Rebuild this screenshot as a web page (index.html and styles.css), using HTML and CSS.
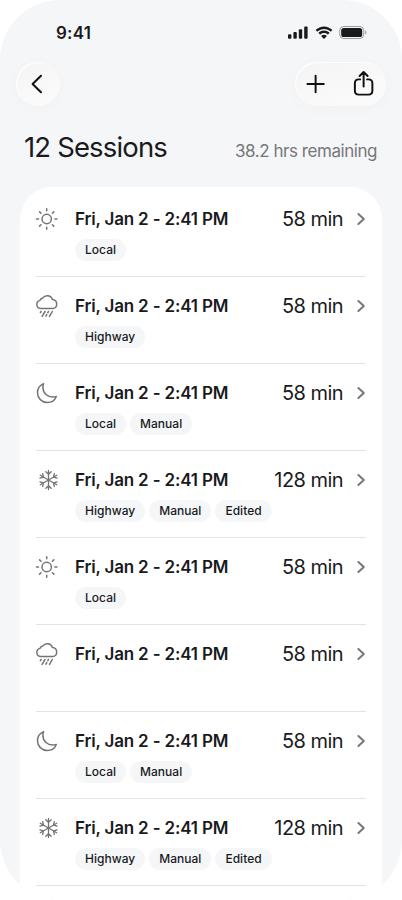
FILE: index.html
```html
<!DOCTYPE html>
<html lang="en">
<head>
<meta charset="utf-8">
<title>Sessions</title>
<link rel="stylesheet" href="styles.css">
</head>
<body>
<svg class="defs" width="0" height="0" aria-hidden="true">
  <symbol id="sun" viewBox="0 0 24 24"><circle cx="11.700" cy="12" r="4.700"/><path d="M11.700 1.800v2M11.700 20.200v2M1.500 12h2M19.900 12h2M4.600 4.900l1.400 1.400M17.400 17.700l1.400 1.400M4.600 19.100l1.400-1.400M17.400 6.300l1.400-1.400"/></symbol>
  <symbol id="rain" viewBox="0 0 24 24"><path d="M5.500 14.600a4.200 4.200 0 0 1-.6-8.200 3.800 3.800 0 0 1 2.900-2.500A5.500 5.500 0 0 1 17.500 5.600a4.550 4.550 0 0 1 .5 9z"/><path class="thin" d="M6.100 17.500l-.7 1.200M10 17.500l-2.900 4.900M13.500 17.500l-.7 1.200M11.800 20.600l-.9 1.600M17.300 17.500l-2.800 4.900"/></symbol>
  <symbol id="moon" viewBox="0 0 24 24"><path d="M8.600 2.600C4.800 4.200 2.500 7.600 2.500 11.700c0 5.500 4.200 9.700 9.700 9.700 4.200 0 7.700-2.300 9.100-6-1.100.4-2.200.6-3.500.6-5.700 0-9.900-4-9.900-9.700 0-1.400.2-2.600.7-3.700z"/></symbol>
  <symbol id="snow" viewBox="0 0 24 24"><g id="arm"><path d="M11.500 12V2.500M8.800 3.700l2.700 2.500 2.700-2.500"/></g><use href="#arm" transform="rotate(60 11.500 12)"/><use href="#arm" transform="rotate(120 11.500 12)"/><use href="#arm" transform="rotate(180 11.500 12)"/><use href="#arm" transform="rotate(240 11.500 12)"/><use href="#arm" transform="rotate(300 11.500 12)"/></symbol>
  <symbol id="chev" viewBox="0 0 10 14"><path d="M2.400 2l5.400 5-5.400 5"/></symbol>
</svg>
<main class="screen">
  <header class="status">
    <span class="time">9:41</span>
    <div class="indicators">
      <svg width="20" height="13" viewBox="0 0 20 13"><rect x="0" y="8.300" width="3.400" height="4.400" rx="1"/><rect x="5.400" y="6" width="3.400" height="6.700" rx="1"/><rect x="10.800" y="3.200" width="3.400" height="9.500" rx="1"/><rect x="16.200" y=".5" width="3.400" height="12.200" rx="1"/></svg>
      <svg width="18" height="13" viewBox="0 0 18 13"><path d="M9 2.900c2.500 0 4.800 1 6.500 2.600l.4.100 1.300-1.400v-.4A12 12 0 0 0 9 .4 12 12 0 0 0 .8 3.800v.4l1.300 1.400.4-.1A9.400 9.400 0 0 1 9 2.900zM9 7c1.400 0 2.700.5 3.600 1.400h.4l1.400-1.500v-.4A7.900 7.900 0 0 0 9 4.500a7.900 7.900 0 0 0-5.400 2v.4L5 8.400h.4A5.300 5.300 0 0 1 9 7zM9.300 12.700l2.400-2.500v-.4A4 4 0 0 0 9 8.700a4 4 0 0 0-2.700 1.100v.4l2.400 2.500z"/></svg>
      <svg width="28" height="13" viewBox="0 0 28 13"><rect x=".7" y=".5" width="24" height="12" rx="4" fill="none" stroke="#1a1a1c" stroke-opacity=".4"/><rect x="2.200" y="2" width="21" height="9" rx="2.600"/><path d="M26.200 4.500v4c.8-.3 1.300-1.100 1.300-2s-.5-1.700-1.300-2z" opacity=".4"/></svg>
    </div>
  </header>
  <nav class="toolbar">
    <button class="glass back" aria-label="Back"><svg width="44" height="44" viewBox="0 0 44 44"><path d="M25 13.700L16.600 22 25 30.300"/></svg></button>
    <div class="glass actions">
      <svg width="44" height="44" viewBox="0 0 44 44"><path d="M22 13.700v16.600M13.700 22h16.600"/></svg>
      <svg width="44" height="44" viewBox="0 0 44 44"><path d="M18.500 17.300h-1.400c-2.600 0-4 1.400-4 3.900v7.700c0 2.500 1.400 3.900 4 3.900h9.800c2.600 0 4-1.400 4-3.900v-7.700c0-2.500-1.400-3.900-4-3.900h-1.400M22 24.500V10.200M17.900 13.900L22 9.800l4.100 4.100"/></svg>
    </div>
  </nav>
  <section class="heading"><h1>12 Sessions</h1><p>38.2 hrs remaining</p></section>
  <ul class="card">
    <li class="row"><svg class="icon"><use href="#sun"/></svg><div class="info"><h2>Fri, Jan 2 - 2:41 PM</h2><div class="tags"><span>Local</span></div></div><div class="length">58 min</div><svg class="chev"><use href="#chev"/></svg></li>
    <li class="row"><svg class="icon"><use href="#rain"/></svg><div class="info"><h2>Fri, Jan 2 - 2:41 PM</h2><div class="tags"><span>Highway</span></div></div><div class="length">58 min</div><svg class="chev"><use href="#chev"/></svg></li>
    <li class="row"><svg class="icon"><use href="#moon"/></svg><div class="info"><h2>Fri, Jan 2 - 2:41 PM</h2><div class="tags"><span>Local</span><span>Manual</span></div></div><div class="length">58 min</div><svg class="chev"><use href="#chev"/></svg></li>
    <li class="row"><svg class="icon snow"><use href="#snow"/></svg><div class="info"><h2>Fri, Jan 2 - 2:41 PM</h2><div class="tags"><span>Highway</span><span>Manual</span><span>Edited</span></div></div><div class="length">128 min</div><svg class="chev"><use href="#chev"/></svg></li>
    <li class="row"><svg class="icon"><use href="#sun"/></svg><div class="info"><h2>Fri, Jan 2 - 2:41 PM</h2><div class="tags"><span>Local</span></div></div><div class="length">58 min</div><svg class="chev"><use href="#chev"/></svg></li>
    <li class="row"><svg class="icon"><use href="#rain"/></svg><div class="info"><h2>Fri, Jan 2 - 2:41 PM</h2></div><div class="length">58 min</div><svg class="chev"><use href="#chev"/></svg></li>
    <li class="row"><svg class="icon"><use href="#moon"/></svg><div class="info"><h2>Fri, Jan 2 - 2:41 PM</h2><div class="tags"><span>Local</span><span>Manual</span></div></div><div class="length">58 min</div><svg class="chev"><use href="#chev"/></svg></li>
    <li class="row"><svg class="icon snow"><use href="#snow"/></svg><div class="info"><h2>Fri, Jan 2 - 2:41 PM</h2><div class="tags"><span>Highway</span><span>Manual</span><span>Edited</span></div></div><div class="length">128 min</div><svg class="chev"><use href="#chev"/></svg></li>
  </ul>
</main>
</body>
</html>
```
FILE: styles.css
```css
* { box-sizing: border-box; }
body { margin: 0; background: #fff; color: #1a1a1c; font-family: Inter, sans-serif; }
h1, h2, p, ul { margin: 0; padding: 0; }
svg { display: block; }
.defs { position: absolute; }
.screen { width: 402px; height: 900px; overflow: hidden; border-radius: 60px; background: #f5f6f8; }
.status { height: 62px; padding: 22px 35px 0 56px; display: flex; justify-content: space-between; }
.time { font-size: 17px; line-height: 22px; font-weight: 600; letter-spacing: .2px; }
.indicators { display: flex; gap: 6.5px; padding-top: 4px; fill: #1a1a1c; }
.toolbar { height: 44px; padding: 0 16px; display: flex; justify-content: space-between; }
.glass { display: flex; height: 44px; padding: 0; border: 0; border-radius: 22px; background: linear-gradient(160deg, #f4f4f5, #fafafa 75%); box-shadow: inset 1px 1px 1px #fff, 0 2px 16px rgba(0,0,0,.025); }
.glass svg { fill: none; stroke: #111; stroke-width: 2; stroke-linecap: round; stroke-linejoin: round; }
.back { width: 44px; }
.actions { width: 91px; gap: 4.5px; }
.actions svg { margin-left: -1px; margin-right: 1px; }
.heading { height: 81px; padding: 24px 25px 0 24px; display: flex; justify-content: space-between; }
h1 { font-size: 27.5px; line-height: 34px; font-weight: 400; letter-spacing: -.85px; }
.heading p { padding-top: 10px; font-size: 17px; line-height: 22px; color: #77777a; letter-spacing: -.45px; }
.card { height: 740px; margin: 0 20px; padding: 3px 16px 0; border-radius: 32px 32px 0 0; background: #fff; list-style: none; }
.row { height: 87px; padding-top: 16px; display: flex; border-bottom: 1px solid #e3e3e5; }
.icon { width: 24px; height: 24px; margin: 1px 16px 0 -1px; fill: none; stroke: #747478; stroke-width: 1.5; stroke-linecap: round; stroke-linejoin: round; }
.icon .thin { stroke-width: 1.2; }
.icon.snow { margin: 1px 14px 0 1px; stroke-width: 1.3; }
.info { flex: 1; }
h2 { font-size: 17px; line-height: 26px; font-weight: 580; letter-spacing: -.17px; white-space: nowrap; }
.tags { display: flex; gap: 4px; margin-top: 7px; }
.tags span { height: 22px; padding: 0 10px; border-radius: 11px; background: #f5f6f8; font-size: 12px; line-height: 22px; font-weight: 500; letter-spacing: .02px; }
.length { font-size: 20px; line-height: 26px; letter-spacing: -.55px; }
.chev { width: 10px; height: 14px; margin: 6px 0 0 13px; fill: none; stroke: #77777a; stroke-width: 2; stroke-linecap: round; stroke-linejoin: round; }
```
